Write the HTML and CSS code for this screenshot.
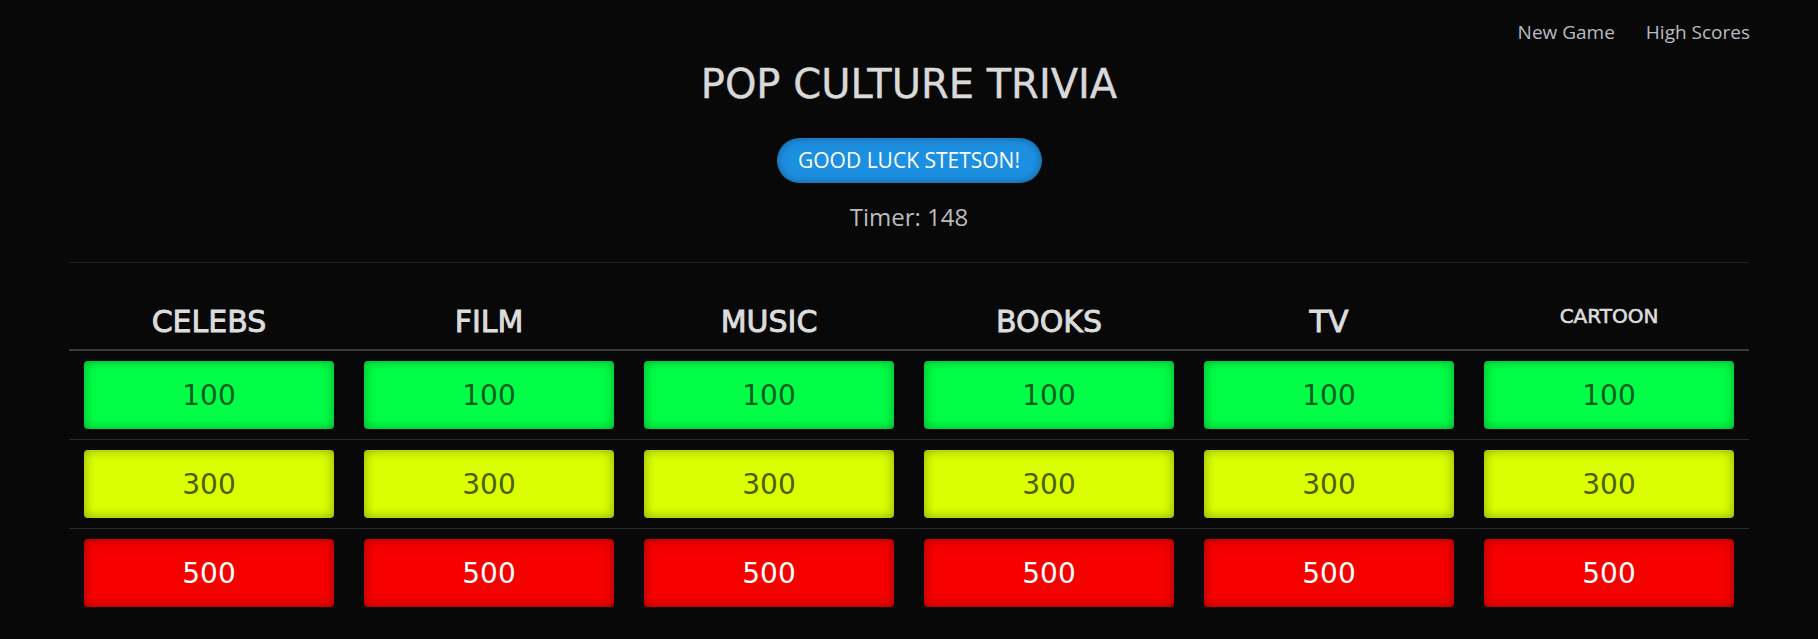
FILE: index.html
```html
<!DOCTYPE html>
<html lang="en">
<head>
<meta charset="utf-8">
<title>Pop Culture Trivia</title>
<link rel="stylesheet" href="styles.css">
</head>
<body>
<nav class="topnav">
  <a class="nav-link" href="#">New Game</a>
  <a class="nav-link" href="#">High Scores</a>
</nav>
<main class="container">
  <h1 class="title">POP CULTURE TRIVIA</h1>
  <div class="greeting-wrap"><span class="greeting">GOOD LUCK STETSON!</span></div>
  <p class="timer">Timer: 148</p>
  <hr class="divider">
  <table class="board">
    <thead>
      <tr>
        <th><h3 class="cat">CELEBS</h3></th>
        <th><h3 class="cat">FILM</h3></th>
        <th><h3 class="cat">MUSIC</h3></th>
        <th><h3 class="cat">BOOKS</h3></th>
        <th><h3 class="cat">TV</h3></th>
        <th><h5 class="cat cat-small">CARTOON</h5></th>
      </tr>
    </thead>
    <tbody>
      <tr>
        <td><button class="tile tile-100">100</button></td>
        <td><button class="tile tile-100">100</button></td>
        <td><button class="tile tile-100">100</button></td>
        <td><button class="tile tile-100">100</button></td>
        <td><button class="tile tile-100">100</button></td>
        <td><button class="tile tile-100">100</button></td>
      </tr>
      <tr>
        <td><button class="tile tile-300">300</button></td>
        <td><button class="tile tile-300">300</button></td>
        <td><button class="tile tile-300">300</button></td>
        <td><button class="tile tile-300">300</button></td>
        <td><button class="tile tile-300">300</button></td>
        <td><button class="tile tile-300">300</button></td>
      </tr>
      <tr>
        <td><button class="tile tile-500">500</button></td>
        <td><button class="tile tile-500">500</button></td>
        <td><button class="tile tile-500">500</button></td>
        <td><button class="tile tile-500">500</button></td>
        <td><button class="tile tile-500">500</button></td>
        <td><button class="tile tile-500">500</button></td>
      </tr>
    </tbody>
  </table>
</main>
</body>
</html>
```
FILE: styles.css
```css
* { box-sizing: border-box; }

html, body {
  margin: 0;
  padding: 0;
  background: #080808;
  height: 100%;
}

body {
  font-family: "Open Sans", "Noto Sans", sans-serif;
  color: #bbbbbb;
}

.topnav {
  display: flex;
  justify-content: flex-end;
  gap: 31px;
  padding: 19px 68px 0 0;
  height: 44px;
}

.nav-link {
  font-size: 19px;
  line-height: 26px;
  color: #b9bcc0;
  text-decoration: none;
}

.container {
  width: 1680px;
  margin: 0 auto;
}

.title {
  margin: 15px 0 0;
  text-align: center;
  font-family: "DejaVu Sans", sans-serif;
  font-weight: normal;
  font-size: 40px;
  line-height: 50px;
  color: #d9d9d9;
  -webkit-text-stroke: 0.4px #d9d9d9;
}

.greeting-wrap {
  display: flex;
  justify-content: center;
  margin-top: 29px;
}

.greeting {
  display: inline-flex;
  align-items: center;
  justify-content: center;
  width: 265px;
  height: 45px;
  border-radius: 23px;
  background: #1d8fe0;
  box-shadow: inset 0 0 9px rgba(0, 0, 0, 0.35);
  color: #ffffff;
  font-size: 21px;
  line-height: 1;
}

.timer {
  margin: 19px 0 0;
  text-align: center;
  font-size: 24px;
  line-height: 30px;
  color: #bbbbbb;
}

.divider {
  margin: 30px 0 0;
  border: 0;
  height: 1px;
  background: #1f1f1f;
}

.board {
  width: 100%;
  border-collapse: collapse;
  table-layout: fixed;
}

.board th {
  vertical-align: top;
  padding: 41px 15px 9px;
  border-bottom: 2px solid #3a3a3a;
  text-align: center;
}

.cat {
  margin: 0;
  font-family: "DejaVu Sans", sans-serif;
  font-weight: normal;
  font-size: 30px;
  line-height: 36px;
  color: #dcdcdc;
  -webkit-text-stroke: 0.9px #dcdcdc;
}

.cat-small {
  font-size: 20px;
  line-height: 24px;
  -webkit-text-stroke: 0.6px #dcdcdc;
}

.board td {
  padding: 10px 15px;
  border-top: 1px solid #282828;
}

.board tbody tr:first-child td {
  border-top: 0;
}

.tile {
  display: block;
  width: 100%;
  height: 68px;
  border: 0;
  border-radius: 4px;
  font-family: "DejaVu Sans", sans-serif;
  font-size: 28px;
  cursor: pointer;
  box-shadow: inset 0 0 12px rgba(0, 0, 0, 0.35);
}

.tile-100 {
  background: #00ff46;
  color: #0a5c1f;
}

.tile-300 {
  background: #d9ff00;
  color: #4f5c00;
}

.tile-500 {
  background: #f70000;
  color: #ffffff;
}
```
